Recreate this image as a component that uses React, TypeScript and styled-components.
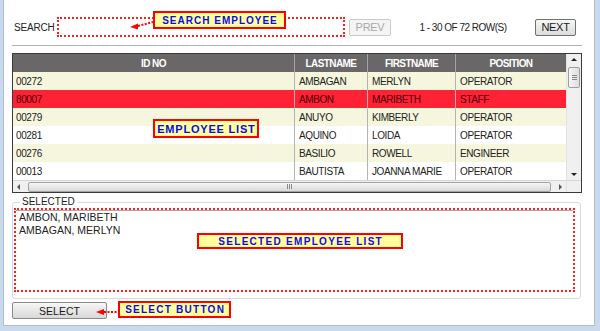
import React from 'react';
import styled, { createGlobalStyle } from 'styled-components';

const Global = createGlobalStyle`
  html, body { margin: 0; padding: 0; }
  body {
    width: 600px; height: 331px; overflow: hidden;
    background: #c9daee;
    font-family: "Liberation Sans", Arial, sans-serif;
    color: #222;
  }
  * { box-sizing: border-box; }
`;

const Frame = styled.div`
  width: 600px;
  height: 331px;
  padding: 0 5px 5px 3px;
  display: flex;
`;

const Panel = styled.div`
  flex: 1;
  position: relative;
  background: #fff;
  border: 1px solid #aebfd3;
  border-top: none;
  display: flex;
  flex-direction: column;
  padding: 17px 12px 0 8px;
`;

const SearchRow = styled.div`
  display: flex;
  align-items: center;
  height: 20px;
`;

const SearchLabel = styled.span`
  width: 45px;
  padding-left: 2px;
  font-size: 10px;
  letter-spacing: -0.2px;
`;

const SearchBox = styled.input`
  width: 288px;
  height: 20px;
  border: 2px dotted #ff1e1e;
  background: #fff;
  outline: none;
  padding: 0 3px;
  font: 10px "Liberation Sans", Arial, sans-serif;
`;

const PagerButton = styled.button<{ $disabled?: boolean; $w: number }>`
  width: ${p => p.$w}px;
  height: 17px;
  padding: 0;
  border-radius: 2px;
  font: 11px "Liberation Sans", Arial, sans-serif;
  letter-spacing: -0.3px;
  border: 1px solid ${p => (p.$disabled ? '#cbcbcb' : '#707070')};
  background: ${p => (p.$disabled ? '#f4f4f4' : 'linear-gradient(#f7f7f7, #dcdcdc)')};
  color: ${p => (p.$disabled ? '#a9a9a9' : '#1a1a1a')};
`;

const PrevWrap = styled.div`
  margin-left: 4px;
  display: flex;
`;

const PagerText = styled.span`
  flex: 1;
  text-align: center;
  font-size: 10px;
  letter-spacing: -0.5px;
`;

const NextWrap = styled.div`
  margin-right: 6px;
  display: flex;
`;

const Rule = styled.div`
  margin-top: 8px;
  height: 1px;
  background: #b3b3b3;
`;

const TableBox = styled.div`
  margin-top: 7px;
  width: 570px;
  height: 140px;
  border: 1px solid #3a3a3a;
  display: grid;
  grid-template-columns: 553px 15px;
  grid-template-rows: 126px 12px;
`;

const DataArea = styled.div`
  display: flex;
  flex-direction: column;
  overflow: hidden;
`;

const cols = '281px 73px 88px 111px';

const HeaderRow = styled.div`
  display: grid;
  grid-template-columns: ${cols};
  height: 18px;
  background: #696768;
`;

const HeaderCell = styled.div<{ $first?: boolean }>`
  display: flex;
  align-items: center;
  justify-content: center;
  color: #fff;
  font-weight: bold;
  font-size: 10px;
  letter-spacing: -0.6px;
  border-left: ${p => (p.$first ? 'none' : '1px solid #a3a3a3')};
`;

type RowKind = 'cream' | 'white' | 'selected';

const DataRow = styled.div<{ $kind: RowKind }>`
  display: grid;
  grid-template-columns: ${cols};
  height: 18px;
  background: ${p => (p.$kind === 'cream' ? '#f6f6de' : p.$kind === 'selected' ? '#ff2234' : '#fff')};
  color: ${p => (p.$kind === 'selected' ? '#4a0008' : '#222')};
`;

const Cell = styled.div<{ $first?: boolean }>`
  display: flex;
  align-items: center;
  padding-left: ${p => (p.$first ? 3 : 4)}px;
  font-size: 10px;
  letter-spacing: -0.4px;
  white-space: nowrap;
  border-left: ${p => (p.$first ? 'none' : '1px solid #b4b4b4')};
`;

const VScroll = styled.div`
  background: #f0f0f0;
  border-left: 1px solid #e2e2e2;
  display: flex;
  flex-direction: column;
  align-items: center;
  padding: 4px 0 4px 0;
`;

const Arrow = styled.div<{ $dir: 'up' | 'down' | 'left' | 'right' }>`
  width: 0;
  height: 0;
  ${p =>
    p.$dir === 'up'
      ? 'border-left: 3px solid transparent; border-right: 3px solid transparent; border-bottom: 3px solid #222;'
      : p.$dir === 'down'
      ? 'border-left: 3px solid transparent; border-right: 3px solid transparent; border-top: 3px solid #222;'
      : p.$dir === 'left'
      ? 'border-top: 3px solid transparent; border-bottom: 3px solid transparent; border-right: 3px solid #555;'
      : 'border-top: 3px solid transparent; border-bottom: 3px solid transparent; border-left: 3px solid #555;'}
`;

const VThumb = styled.div`
  margin-top: 6px;
  width: 12px;
  height: 21px;
  border: 1px solid #9d9d9d;
  border-radius: 2px;
  background: linear-gradient(90deg, #f6f6f6, #dedede);
  display: flex;
  flex-direction: column;
  align-items: center;
  justify-content: center;
  gap: 1px;
`;

const Grip = styled.div<{ $vertical?: boolean }>`
  background: #8a8a8a;
  width: ${p => (p.$vertical ? '1px' : '5px')};
  height: ${p => (p.$vertical ? '5px' : '1px')};
`;

const Spacer = styled.div`
  flex: 1;
`;

const HScroll = styled.div`
  background: #f0f0f0;
  border-top: 1px solid #d6d6d6;
  display: flex;
  align-items: center;
  padding: 0 4px 0 4px;
`;

const HThumb = styled.div`
  margin-left: 8px;
  width: 523px;
  height: 10px;
  border: 1px solid #a3a3a3;
  border-radius: 2px;
  background: linear-gradient(#f6f6f6, #d9d9d9);
  display: flex;
  align-items: center;
  justify-content: center;
  gap: 1px;
`;

const Corner = styled.div`
  background: #f0f0f0;
  border-top: 1px solid #d6d6d6;
  border-left: 1px solid #e2e2e2;
`;

const Fieldset = styled.fieldset`
  margin: 3px 0 0 0;
  width: 569px;
  padding: 0 5px 6px 1px;
  border: 1px solid #d3dae3;
  border-radius: 3px;
`;

const Legend = styled.legend`
  margin-left: 6px;
  padding: 0 2px;
  font-size: 10px;
  line-height: 12px;
  color: #222;
`;

const SelectedArea = styled.textarea`
  display: block;
  width: 561px;
  height: 84px;
  resize: none;
  border: 2px dotted #ff1e1e;
  box-shadow: inset 0 1px 0 #a8a8a8;
  padding: 1px 3px;
  margin: 0;
  font: 10.5px/13px "Liberation Sans", Arial, sans-serif;
  color: #222;
  outline: none;
  overflow: hidden;
`;

const SelectButton = styled.button`
  margin-top: 3px;
  width: 95px;
  height: 17px;
  padding: 0;
  border: 1px solid #8a8a8a;
  border-radius: 2px;
  background: linear-gradient(#f6f6f6, #d8d8d8);
  font: 10.5px "Liberation Sans", Arial, sans-serif;
  color: #1a1a1a;
`;

const Note = styled.div<{ $x: number; $y: number; $w: number; $h: number; $fs: number; $ls: number }>`
  position: absolute;
  left: ${p => p.$x}px;
  top: ${p => p.$y}px;
  width: ${p => p.$w}px;
  height: ${p => p.$h}px;
  background: #ffff9c;
  border: 2px solid #f00;
  display: flex;
  align-items: center;
  justify-content: center;
  color: #0a0af0;
  font-weight: bold;
  font-family: "Liberation Sans", Arial, sans-serif;
  font-size: ${p => p.$fs}px;
  letter-spacing: ${p => p.$ls}px;
  white-space: nowrap;
  padding-left: ${p => p.$ls}px;
`;

const Pointer = styled.svg<{ $x: number; $y: number }>`
  position: absolute;
  left: ${p => p.$x}px;
  top: ${p => p.$y}px;
  overflow: visible;
`;

const rows: { id: string; last: string; first: string; pos: string; kind: RowKind }[] = [
  { id: '00272', last: 'AMBAGAN', first: 'MERLYN', pos: 'OPERATOR', kind: 'cream' },
  { id: '80007', last: 'AMBON', first: 'MARIBETH', pos: 'STAFF', kind: 'selected' },
  { id: '00279', last: 'ANUYO', first: 'KIMBERLY', pos: 'OPERATOR', kind: 'cream' },
  { id: '00281', last: 'AQUINO', first: 'LOIDA', pos: 'OPERATOR', kind: 'white' },
  { id: '00276', last: 'BASILIO', first: 'ROWELL', pos: 'ENGINEER', kind: 'cream' },
  { id: '00013', last: 'BAUTISTA', first: 'JOANNA MARIE', pos: 'OPERATOR', kind: 'white' },
];

export default function App() {
  return (
    <>
      <Global />
      <Frame>
        <Panel>
          <SearchRow>
            <SearchLabel>SEARCH</SearchLabel>
            <SearchBox />
            <PrevWrap>
              <PagerButton $disabled $w={42}>PREV</PagerButton>
            </PrevWrap>
            <PagerText>1 - 30 OF 72 ROW(S)</PagerText>
            <NextWrap>
              <PagerButton $w={41}>NEXT</PagerButton>
            </NextWrap>
          </SearchRow>
          <Rule />
          <TableBox>
            <DataArea>
              <HeaderRow>
                <HeaderCell $first>ID NO</HeaderCell>
                <HeaderCell>LASTNAME</HeaderCell>
                <HeaderCell>FIRSTNAME</HeaderCell>
                <HeaderCell>POSITION</HeaderCell>
              </HeaderRow>
              {rows.map(r => (
                <DataRow key={r.id} $kind={r.kind}>
                  <Cell $first>{r.id}</Cell>
                  <Cell>{r.last}</Cell>
                  <Cell>{r.first}</Cell>
                  <Cell>{r.pos}</Cell>
                </DataRow>
              ))}
            </DataArea>
            <VScroll>
              <Arrow $dir="up" />
              <VThumb>
                <Grip />
                <Grip />
                <Grip />
              </VThumb>
              <Spacer />
              <Arrow $dir="down" />
            </VScroll>
            <HScroll>
              <Arrow $dir="left" />
              <HThumb>
                <Grip $vertical />
                <Grip $vertical />
                <Grip $vertical />
              </HThumb>
              <Spacer />
              <Arrow $dir="right" />
            </HScroll>
            <Corner />
          </TableBox>
          <Fieldset>
            <Legend>SELECTED</Legend>
            <SelectedArea readOnly value={'AMBON, MARIBETH\nAMBAGAN, MERLYN'} />
          </Fieldset>
          <SelectButton>SELECT</SelectButton>

          <Note $x={149} $y={11} $w={133} $h={18} $fs={10} $ls={1}>SEARCH EMPLOYEE</Note>
          <Pointer $x={122} $y={16} width={32} height={16} viewBox="0 0 32 16">
            <polygon points="4,11 12,7.5 12,13.5" fill="#f00" />
            <line x1="12" y1="10" x2="27" y2="6" stroke="#f00" strokeWidth="2" strokeDasharray="2 1.5" />
          </Pointer>
          <Note $x={149} $y={119} $w={106} $h={19} $fs={11} $ls={0.8}>EMPLOYEE LIST</Note>
          <Note $x={193} $y={233} $w={206} $h={16} $fs={10} $ls={1.3}>SELECTED EMPLOYEE LIST</Note>
          <Note $x={114} $y={301} $w={113} $h={17} $fs={10} $ls={1.25}>SELECT BUTTON</Note>
          <Pointer $x={90} $y={306} width={26} height={12} viewBox="0 0 26 12">
            <polygon points="2,6 10,3 10,9" fill="#f00" />
            <line x1="10" y1="6" x2="23" y2="6" stroke="#f00" strokeWidth="2" strokeDasharray="2 1.5" />
          </Pointer>
        </Panel>
      </Frame>
    </>
  );
}
